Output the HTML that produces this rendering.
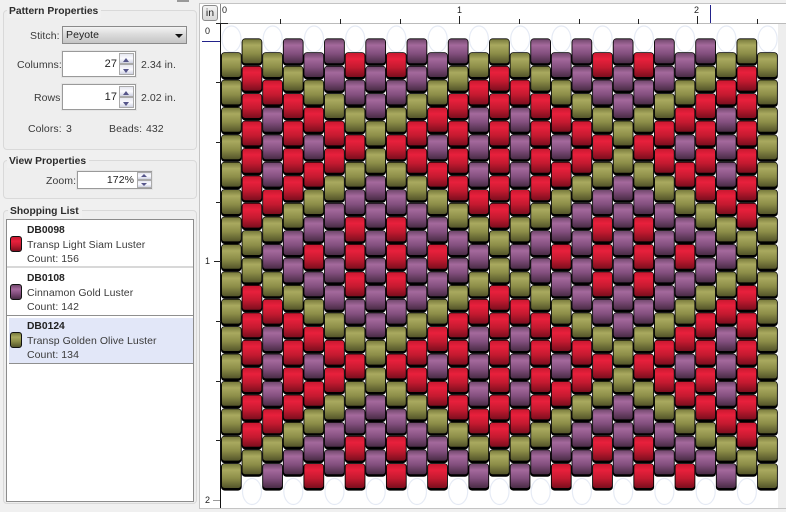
<!DOCTYPE html>
<html><head><meta charset="utf-8"><style>
html,body{margin:0;padding:0}
body{width:786px;height:512px;overflow:hidden;background:#f0f0f0;position:relative;font-family:"Liberation Sans",sans-serif;font-size:10.5px;color:#3a3a3a;letter-spacing:.06px}
.a{position:absolute;white-space:nowrap}
.box{position:absolute;border:1px solid #d9d9d9;border-radius:4px;background:#eeeeee;box-sizing:border-box}
.tt{position:absolute;font-weight:bold;font-size:10.3px;background:#f0f0f0;padding:0 3px 0 2px;line-height:13px;color:#2c2c2c;letter-spacing:0}
.in{position:absolute;background:#fff;border:1px solid #9a9a9a;box-shadow:0 0 0 1px #e4e4e4;box-sizing:border-box;text-align:right;color:#222;font-size:11px}
.sp{position:absolute;width:15px;background:linear-gradient(#e6e7f0,#fbfbff 50%,#cfd2e2);border:1px solid #aaa;box-sizing:border-box}
.sp i{position:absolute;left:3px;width:0;height:0;border-left:3.5px solid transparent;border-right:3.5px solid transparent}
.u i{top:4px;border-bottom:4px solid #55558a}
.d i{top:4px;border-top:4px solid #55558a}
.sw{position:absolute;left:10px;width:12px;height:16px;border:1px solid #111;border-radius:3px;box-sizing:border-box}
.b{font-weight:bold;color:#222;font-size:10.3px;letter-spacing:0}
</style></head><body>

<div class="a" style="left:177px;top:0;width:12px;height:2px;background:#999"></div>

<div class="box" style="left:3px;top:10px;width:194px;height:140px"></div>
<div class="tt" style="left:7px;top:5px">Pattern Properties</div>
<div class="a" style="left:30px;top:30px">Stitch:</div>
<div class="a" style="left:62px;top:26px;width:125px;height:18px;box-sizing:border-box;border:1px solid #8a8a8a;background:linear-gradient(#f3f3f3,#dcdcdc 45%,#c4c4c4);line-height:17px;padding-left:3px;color:#222">Peyote</div>
<div class="a" style="left:175px;top:34px;width:0;height:0;border-left:4px solid transparent;border-right:4px solid transparent;border-top:4px solid #111"></div>

<div class="a" style="left:17px;top:59px">Columns:</div>
<div class="in" style="left:62px;top:51px;width:74px;height:26px;line-height:24px;padding-right:18px">27</div>
<div class="sp u" style="left:119px;top:53px;height:11px"><i></i></div>
<div class="sp d" style="left:119px;top:64px;height:11px"><i></i></div>
<div class="a" style="left:141px;top:59px">2.34 in.</div>

<div class="a" style="left:34px;top:92px">Rows:</div>
<div class="in" style="left:62px;top:84px;width:74px;height:26px;line-height:24px;padding-right:18px">17</div>
<div class="sp u" style="left:119px;top:86px;height:11px"><i></i></div>
<div class="sp d" style="left:119px;top:97px;height:11px"><i></i></div>
<div class="a" style="left:141px;top:92px">2.02 in.</div>

<div class="a" style="left:28px;top:123px">Colors:</div>
<div class="a" style="left:66px;top:123px">3</div>
<div class="a" style="left:109px;top:123px">Beads:</div>
<div class="a" style="left:146px;top:123px">432</div>

<div class="box" style="left:3px;top:160px;width:194px;height:39px"></div>
<div class="tt" style="left:7px;top:155px">View Properties</div>
<div class="a" style="left:46px;top:175px">Zoom:</div>
<div class="in" style="left:77px;top:171px;width:75px;height:18px;line-height:17px;padding-right:17px;font-size:10.5px">172%</div>
<div class="sp u" style="left:137px;top:172px;height:8px"><i style="top:1px;border-bottom-width:3px"></i></div>
<div class="sp d" style="left:137px;top:180px;height:8px"><i style="top:2px;border-top-width:3px"></i></div>

<div class="box" style="left:3px;top:210px;width:194px;height:294px"></div>
<div class="tt" style="left:8px;top:205px">Shopping List</div>
<div class="a" style="left:6px;top:219px;width:188px;height:283px;background:#fff;border:1px solid #8c8c8c;box-sizing:border-box"></div>
<div class="a" style="left:7px;top:266px;width:186px;height:2px;background:#d8d8d8"></div>
<div class="a" style="left:7px;top:315px;width:186px;height:1px;background:#8f8f8f"></div>
<div class="a" style="left:9px;top:318px;width:184px;height:45px;background:#e2e7f8;border-bottom:1px solid #8f8f8f;box-sizing:content-box"></div>

<div class="sw" style="top:236px;background:linear-gradient(#c81830,#e8203c 30%,#c41a30 60%,#7c0e1e)"></div>
<div class="a b" style="left:27px;top:225px">DB0098</div>
<div class="a" style="left:27px;top:239px">Transp Light Siam Luster</div>
<div class="a" style="left:27px;top:253px">Count: 156</div>

<div class="sw" style="top:284px;background:linear-gradient(#70476c,#a4699c 30%,#834f7e 60%,#4a2c46)"></div>
<div class="a b" style="left:27px;top:273px">DB0108</div>
<div class="a" style="left:27px;top:287px">Cinnamon Gold Luster</div>
<div class="a" style="left:27px;top:301px">Count: 142</div>

<div class="sw" style="top:332px;background:linear-gradient(#787a3c,#a9a95f 30%,#8c8d48 60%,#54552a)"></div>
<div class="a b" style="left:27px;top:321px">DB0124</div>
<div class="a" style="left:27px;top:335px">Transp Golden Olive Luster</div>
<div class="a" style="left:27px;top:349px">Count: 134</div>

<!-- main -->
<div class="a" style="left:199px;top:3px;width:587px;height:506px;background:#fff;border:1px solid #c4c4c4;border-right:0;box-sizing:border-box"></div>
<div class="a" style="left:778px;top:24px;width:8px;height:484px;background:#eeeeee"></div>
<div class="a" style="left:202px;top:5px;width:16px;height:16px;border:1px solid #8a8a8a;border-radius:3px;box-sizing:border-box;background:linear-gradient(#f4f4f4,#d8d8d8);font-size:10.5px;line-height:14px;text-align:center;color:#222;letter-spacing:0">in</div>

<svg class="a" style="left:0;top:0" width="786" height="512" viewBox="0 0 786 512">
<defs>
<linearGradient id="gO" x1="0" y1="0" x2="0" y2="1"><stop offset="0" stop-color="#787a3c"/><stop offset=".25" stop-color="#a9a95f"/><stop offset=".6" stop-color="#8c8d48"/><stop offset="1" stop-color="#54552a"/></linearGradient>
<linearGradient id="gR" x1="0" y1="0" x2="0" y2="1"><stop offset="0" stop-color="#c81830"/><stop offset=".25" stop-color="#e8203c"/><stop offset=".6" stop-color="#c41a30"/><stop offset="1" stop-color="#7c0e1e"/></linearGradient>
<linearGradient id="gP" x1="0" y1="0" x2="0" y2="1"><stop offset="0" stop-color="#70476c"/><stop offset=".25" stop-color="#a4699c"/><stop offset=".6" stop-color="#834f7e"/><stop offset="1" stop-color="#4a2c46"/></linearGradient>
<g id="O"><rect width="20.7" height="27.4" rx="3.6"/><rect x=".9" y=".8" width="18.9" height="24" rx="2.4" fill="url(#gO)"/></g>
<g id="R"><rect width="20.7" height="27.4" rx="3.6"/><rect x=".9" y=".8" width="18.9" height="24" rx="2.4" fill="url(#gR)"/></g>
<g id="P"><rect width="20.7" height="27.4" rx="3.6"/><rect x=".9" y=".8" width="18.9" height="24" rx="2.4" fill="url(#gP)"/></g>
<g id="c0"><use href="#O"/><use href="#O" y="27.4"/><use href="#O" y="54.8"/><use href="#O" y="82.2"/><use href="#O" y="109.6"/><use href="#O" y="137"/><use href="#O" y="164.4"/><use href="#O" y="191.8"/></g>
<g id="c1"><use href="#O"/><use href="#R" y="27.4"/><use href="#R" y="54.8"/><use href="#R" y="82.2"/><use href="#R" y="109.6"/><use href="#R" y="137"/><use href="#R" y="164.4"/><use href="#O" y="191.8"/></g>
<g id="c2"><use href="#O"/><use href="#R" y="27.4"/><use href="#P" y="54.8"/><use href="#P" y="82.2"/><use href="#P" y="109.6"/><use href="#R" y="137"/><use href="#O" y="164.4"/><use href="#P" y="191.8"/></g>
<g id="c3"><use href="#P"/><use href="#O" y="27.4"/><use href="#R" y="54.8"/><use href="#R" y="82.2"/><use href="#R" y="109.6"/><use href="#R" y="137"/><use href="#O" y="164.4"/><use href="#P" y="191.8"/></g>
<g id="c4"><use href="#P"/><use href="#O" y="27.4"/><use href="#R" y="54.8"/><use href="#P" y="82.2"/><use href="#R" y="109.6"/><use href="#O" y="137"/><use href="#P" y="164.4"/><use href="#R" y="191.8"/></g>
<g id="c5"><use href="#P"/><use href="#P" y="27.4"/><use href="#O" y="54.8"/><use href="#R" y="82.2"/><use href="#R" y="109.6"/><use href="#O" y="137"/><use href="#P" y="164.4"/><use href="#P" y="191.8"/></g>
<g id="c6"><use href="#R"/><use href="#P" y="27.4"/><use href="#O" y="54.8"/><use href="#R" y="82.2"/><use href="#O" y="109.6"/><use href="#P" y="137"/><use href="#R" y="164.4"/><use href="#R" y="191.8"/></g>
<g id="c7"><use href="#P"/><use href="#P" y="27.4"/><use href="#P" y="54.8"/><use href="#O" y="82.2"/><use href="#O" y="109.6"/><use href="#P" y="137"/><use href="#P" y="164.4"/><use href="#P" y="191.8"/></g>
<g id="C0"><use href="#c0"/><use href="#c0" y="219.2"/></g>
<g id="C1"><use href="#c1"/><use href="#c1" y="219.2"/></g>
<g id="C2"><use href="#c2"/><use href="#c2" y="219.2"/></g>
<g id="C3"><use href="#c3"/><use href="#c3" y="219.2"/></g>
<g id="C4"><use href="#c4"/><use href="#c4" y="219.2"/></g>
<g id="C5"><use href="#c5"/><use href="#c5" y="219.2"/></g>
<g id="C6"><use href="#c6"/><use href="#c6" y="219.2"/></g>
<g id="C7"><use href="#c7"/><use href="#c7" y="219.2"/></g>
</defs>

<!-- ghost ovals -->
<g fill="#fff" stroke="#e6ebf5" stroke-width="1.2">
<ellipse cx="231.5" cy="39" rx="9.5" ry="13"/><ellipse cx="272.7" cy="39" rx="9.5" ry="13"/><ellipse cx="314" cy="39" rx="9.5" ry="13"/><ellipse cx="355.2" cy="39" rx="9.5" ry="13"/><ellipse cx="396.4" cy="39" rx="9.5" ry="13"/><ellipse cx="437.7" cy="39" rx="9.5" ry="13"/><ellipse cx="478.9" cy="39" rx="9.5" ry="13"/><ellipse cx="520.2" cy="39" rx="9.5" ry="13"/><ellipse cx="561.4" cy="39" rx="9.5" ry="13"/><ellipse cx="602.6" cy="39" rx="9.5" ry="13"/><ellipse cx="643.9" cy="39" rx="9.5" ry="13"/><ellipse cx="685.1" cy="39" rx="9.5" ry="13"/><ellipse cx="726.4" cy="39" rx="9.5" ry="13"/><ellipse cx="767.6" cy="39" rx="9.5" ry="13"/>
<ellipse cx="252" cy="491.5" rx="9.5" ry="13"/><ellipse cx="293.3" cy="491.5" rx="9.5" ry="13"/><ellipse cx="334.5" cy="491.5" rx="9.5" ry="13"/><ellipse cx="375.7" cy="491.5" rx="9.5" ry="13"/><ellipse cx="417" cy="491.5" rx="9.5" ry="13"/><ellipse cx="458.2" cy="491.5" rx="9.5" ry="13"/><ellipse cx="499.5" cy="491.5" rx="9.5" ry="13"/><ellipse cx="540.7" cy="491.5" rx="9.5" ry="13"/><ellipse cx="581.9" cy="491.5" rx="9.5" ry="13"/><ellipse cx="623.2" cy="491.5" rx="9.5" ry="13"/><ellipse cx="664.4" cy="491.5" rx="9.5" ry="13"/><ellipse cx="705.7" cy="491.5" rx="9.5" ry="13"/><ellipse cx="746.9" cy="491.5" rx="9.5" ry="13"/>
</g>

<!-- beads -->
<use href="#C0" x="221" y="52.2"/>
<use href="#C1" x="241.62" y="38.4"/>
<use href="#C2" x="262.24" y="52.2"/>
<use href="#C3" x="282.86" y="38.4"/>
<use href="#C4" x="303.48" y="52.2"/>
<use href="#C5" x="324.1" y="38.4"/>
<use href="#C6" x="344.72" y="52.2"/>
<use href="#C7" x="365.34" y="38.4"/>
<use href="#C6" x="385.96" y="52.2"/>
<use href="#C5" x="406.58" y="38.4"/>
<use href="#C4" x="427.2" y="52.2"/>
<use href="#C3" x="447.82" y="38.4"/>
<use href="#C2" x="468.44" y="52.2"/>
<use href="#C1" x="489.06" y="38.4"/>
<use href="#C2" x="509.68" y="52.2"/>
<use href="#C3" x="530.3" y="38.4"/>
<use href="#C4" x="550.92" y="52.2"/>
<use href="#C5" x="571.54" y="38.4"/>
<use href="#C6" x="592.16" y="52.2"/>
<use href="#C7" x="612.78" y="38.4"/>
<use href="#C6" x="633.4" y="52.2"/>
<use href="#C5" x="654.02" y="38.4"/>
<use href="#C4" x="674.64" y="52.2"/>
<use href="#C3" x="695.26" y="38.4"/>
<use href="#C2" x="715.88" y="52.2"/>
<use href="#C1" x="736.5" y="38.4"/>
<use href="#C0" x="757.12" y="52.2"/>

<!-- rulers -->
<line x1="220.5" y1="4" x2="220.5" y2="23" stroke="#888"/>
<line x1="220" y1="23.5" x2="786" y2="23.5" stroke="#bbb"/>
<line x1="220.5" y1="24" x2="220.5" y2="508" stroke="#111"/>
<g stroke="#222">
<path d="M220 23.5h8M280.5 19v5M340.5 19v5M400.5 19v5M459.5 16v8M519.5 19v5M579.5 19v5M638.5 19v5M697.5 16v8M757.5 19v5"/>
<path d="M216 23.5h5M216 82.5h5M216 142.5h5M216 202.5h5M214 261.5h7M216 321.5h5M216 381.5h5M216 440.5h5"/>
</g>
<line x1="213" y1="500.5" x2="220" y2="500.5" stroke="#999"/>
<line x1="710.5" y1="5" x2="710.5" y2="23" stroke="#22228a"/>
<line x1="202" y1="41.5" x2="220" y2="41.5" stroke="#22228a"/>
<g font-family="Liberation Sans, sans-serif" font-size="9" fill="#222">
<text x="222" y="13">0</text><text x="457" y="13">1</text><text x="694" y="13">2</text>
<text x="205" y="34">0</text><text x="205" y="264">1</text><text x="205" y="503">2</text>
</g>
</svg>
</body></html>
